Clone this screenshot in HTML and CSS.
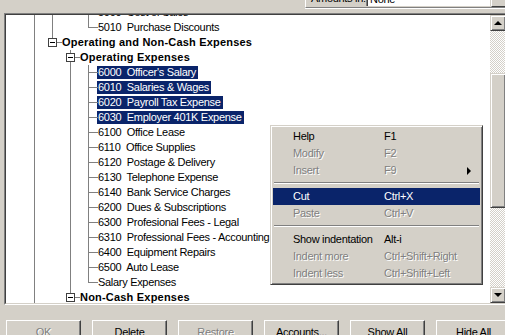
FILE: index.html
```html
<!DOCTYPE html>
<html lang="en">
<head>
  <meta charset="UTF-8" />
  <title>Chart of Accounts</title>
  <link rel="stylesheet" href="styles.css">
</head>
<body>
  <div class="topbar">
    <div class="amounts">
      <span class="amounts-label">Amounts in:</span>
      <span class="amounts-field">None</span>
      <span class="amounts-drop"></span>
    </div>
  </div>

  <div class="panel">
    <div class="panel-inner">
      <div class="tree-view">
        <div class="tree">
          <div class="row"><span class="c pipe"></span><span class="c pipe"></span><span class="c"></span><span class="c tee"></span><span class="label">5000&nbsp; Cost of Sales</span></div>
          <div class="row"><span class="c pipe"></span><span class="c pipe"></span><span class="c"></span><span class="c end"></span><span class="label">5010&nbsp; Purchase Discounts</span></div>
          <div class="row"><span class="c pipe"></span><span class="c end"><i class="box"></i></span><span class="label bold">Operating and Non-Cash Expenses</span></div>
          <div class="row"><span class="c pipe"></span><span class="c"></span><span class="c tee"><i class="box"></i></span><span class="label bold">Operating Expenses</span></div>
          <div class="row"><span class="c pipe"></span><span class="c"></span><span class="c pipe"></span><span class="c tee"></span><span class="label selected">6000&nbsp; Officer's Salary</span></div>
          <div class="row"><span class="c pipe"></span><span class="c"></span><span class="c pipe"></span><span class="c tee"></span><span class="label selected">6010&nbsp; Salaries &amp; Wages</span></div>
          <div class="row"><span class="c pipe"></span><span class="c"></span><span class="c pipe"></span><span class="c tee"></span><span class="label selected">6020&nbsp; Payroll Tax Expense</span></div>
          <div class="row"><span class="c pipe"></span><span class="c"></span><span class="c pipe"></span><span class="c tee"></span><span class="label selected">6030&nbsp; Employer 401K Expense</span></div>
          <div class="row"><span class="c pipe"></span><span class="c"></span><span class="c pipe"></span><span class="c tee"></span><span class="label">6100&nbsp; Office Lease</span></div>
          <div class="row"><span class="c pipe"></span><span class="c"></span><span class="c pipe"></span><span class="c tee"></span><span class="label">6110&nbsp; Office Supplies</span></div>
          <div class="row"><span class="c pipe"></span><span class="c"></span><span class="c pipe"></span><span class="c tee"></span><span class="label">6120&nbsp; Postage &amp; Delivery</span></div>
          <div class="row"><span class="c pipe"></span><span class="c"></span><span class="c pipe"></span><span class="c tee"></span><span class="label">6130&nbsp; Telephone Expense</span></div>
          <div class="row"><span class="c pipe"></span><span class="c"></span><span class="c pipe"></span><span class="c tee"></span><span class="label">6140&nbsp; Bank Service Charges</span></div>
          <div class="row"><span class="c pipe"></span><span class="c"></span><span class="c pipe"></span><span class="c tee"></span><span class="label">6200&nbsp; Dues &amp; Subscriptions</span></div>
          <div class="row"><span class="c pipe"></span><span class="c"></span><span class="c pipe"></span><span class="c tee"></span><span class="label">6300&nbsp; Profesional Fees - Legal</span></div>
          <div class="row"><span class="c pipe"></span><span class="c"></span><span class="c pipe"></span><span class="c tee"></span><span class="label">6310&nbsp; Professional Fees - Accounting</span></div>
          <div class="row"><span class="c pipe"></span><span class="c"></span><span class="c pipe"></span><span class="c tee"></span><span class="label">6400&nbsp; Equipment Repairs</span></div>
          <div class="row"><span class="c pipe"></span><span class="c"></span><span class="c pipe"></span><span class="c tee"></span><span class="label">6500&nbsp; Auto Lease</span></div>
          <div class="row"><span class="c pipe"></span><span class="c"></span><span class="c pipe"></span><span class="c end"></span><span class="label">Salary Expenses</span></div>
          <div class="row"><span class="c pipe"></span><span class="c"></span><span class="c end"><i class="box"></i></span><span class="label bold">Non-Cash Expenses</span></div>
        </div>
      </div>
      <div class="scrollbar">
        <div class="sb-btn"><span class="arrow-up"></span></div>
        <div class="sb-track track-top"></div>
        <div class="sb-thumb"></div>
        <div class="sb-track track-bottom"></div>
        <div class="sb-btn"><span class="arrow-down"></span></div>
      </div>
    </div>
  </div>

  <div class="buttons">
    <button class="btn" disabled>OK</button>
    <button class="btn">Delete</button>
    <button class="btn" disabled>Restore</button>
    <button class="btn">Accounts...</button>
    <button class="btn">Show All</button>
    <button class="btn">Hide All</button>
  </div>

  <div class="menu">
    <div class="item"><span class="mlabel">Help</span><span class="mkey">F1</span></div>
    <div class="item off"><span class="mlabel">Modify</span><span class="mkey">F2</span></div>
    <div class="item off"><span class="mlabel">Insert</span><span class="mkey">F9</span><span class="sub"></span></div>
    <div class="sep"></div>
    <div class="item active"><span class="mlabel">Cut</span><span class="mkey">Ctrl+X</span></div>
    <div class="item off"><span class="mlabel">Paste</span><span class="mkey">Ctrl+V</span></div>
    <div class="sep"></div>
    <div class="item"><span class="mlabel">Show indentation</span><span class="mkey">Alt-i</span></div>
    <div class="item off"><span class="mlabel">Indent more</span><span class="mkey">Ctrl+Shift+Right</span></div>
    <div class="item off"><span class="mlabel">Indent less</span><span class="mkey">Ctrl+Shift+Left</span></div>
  </div>
</body>
</html>
```

FILE: styles.css
```css
body {
  margin: 0; width: 505px; height: 335px; overflow: hidden;
  background: #d4d0c8; position: relative;
  font-family: "Liberation Sans", Arial, sans-serif; font-size: 11px;
  letter-spacing: -0.3px; color: #000;
}

/* top combo, mostly scrolled off */
.topbar { height: 13px; display: flex; justify-content: flex-end; }
.amounts {
  width: 199px; height: 17px; margin-top: -10px;
  display: flex; align-items: center;
  border-left: 1px solid #fff; border-bottom: 1px solid #808080;
  box-shadow: 0 1px 0 #fff;
}
.amounts-label { width: 56px; padding-left: 5px; line-height: 17px; }
.amounts-field {
  width: 120px; height: 15px; line-height: 17px; padding-left: 2px;
  background: #fff; border-left: 1px solid #404040;
  box-shadow: -1px 0 0 #808080;
}
.amounts-drop {
  flex: 1; height: 15px; margin-left: 1px;
  border-left: 1px solid #fff; border-bottom: 1px solid #404040;
}

/* tree panel */
.panel {
  margin-left: 4px; width: 502px; height: 290px;
  border: 1px solid; border-color: #808080 #fff #fff #808080;
}
.panel-inner {
  height: 288px; display: flex;
  border: 1px solid; border-color: #404040 #d4d0c8 #d4d0c8 #404040;
}
.tree-view { flex: 1; background: #fff; overflow: hidden; }
.tree { margin-top: -10px; padding-left: 20px; }

.row { display: flex; height: 15px; line-height: 15px; white-space: nowrap; }
.c { width: 18px; flex: none; position: relative; }
.c.pipe::before, .c.tee::before, .c.end::before {
  content: ''; position: absolute; left: 8px; top: 0; bottom: 0;
  border-left: 1px solid #808080;
}
.c.end::before { bottom: 7px; }
.c.tee::after, .c.end::after {
  content: ''; position: absolute; left: 8px; right: 0; top: 7px;
  border-top: 1px solid #808080;
}
.box {
  position: absolute; left: 4px; top: 3px; width: 7px; height: 7px;
  border: 1px solid #404040; background: #fff; z-index: 1;
}
.box::after {
  content: ''; position: absolute; left: 1px; top: 3px; width: 5px;
  border-top: 1px solid #000;
}

.label {
  margin-left: -1px; padding: 0 2px 0 1px;
  height: 13px; line-height: 13px; margin-top: 1px;
}
.label.bold { font-weight: bold; letter-spacing: 0.2px; }
.label.selected { background: #0a246a; color: #fff; }

/* scrollbar */
.scrollbar { width: 16px; flex: none; display: flex; flex-direction: column; }
.sb-btn, .sb-thumb {
  border: 1px solid; border-color: #d4d0c8 #404040 #404040 #d4d0c8;
  box-shadow: inset 1px 1px #fff, inset -1px -1px #808080;
  background: #d4d0c8;
}
.sb-btn {
  height: 14px; flex: none;
  display: flex; align-items: center; justify-content: center;
}
.sb-track {
  background: repeating-conic-gradient(#d4d0c8 0 25%, #fff 0 50%) 0 0 / 2px 2px;
}
.track-top { height: 42px; }
.sb-thumb { height: 133px; }
.track-bottom { flex: 1; }
.arrow-up, .arrow-down {
  width: 0; height: 0;
  border-left: 4px solid transparent; border-right: 4px solid transparent;
}
.arrow-up { border-bottom: 4px solid #000; }
.arrow-down { border-top: 4px solid #000; }

/* bottom buttons */
.buttons { display: flex; gap: 11px; padding: 15px 0 0 6px; }
.btn {
  width: 75px; height: 23px; flex: none; padding: 0;
  font: inherit; letter-spacing: inherit; color: #000;
  background: #d4d0c8;
  border: 1px solid; border-color: #fff #404040 #404040 #fff;
  box-shadow: inset -1px -1px #808080;
}
.btn:disabled { color: #808080; text-shadow: 1px 1px 0 #fff; }

/* context menu */
.menu {
  position: absolute; left: 270px; top: 125px; width: 207px;
  padding: 2px;
  border: 1px solid; border-color: #d4d0c8 #404040 #404040 #d4d0c8;
  box-shadow: inset 1px 1px #fff, inset -1px -1px #808080;
  background: #d4d0c8;
}
.item { display: flex; align-items: center; height: 17px; line-height: 17px; padding-left: 20px; }
.mlabel { width: 91px; }
.mkey { flex: 1; }
.item.off { color: #808080; text-shadow: 1px 1px 0 #fff; }
.item.active { background: #0a246a; color: #fff; }
.sub {
  width: 0; height: 0; margin-right: 9px;
  border-top: 4px solid transparent; border-bottom: 4px solid transparent;
  border-left: 4px solid #000;
}
.sep {
  height: 0; margin: 3px 1px 4px 1px;
  border-top: 1px solid #808080; border-bottom: 1px solid #fff;
}
```
